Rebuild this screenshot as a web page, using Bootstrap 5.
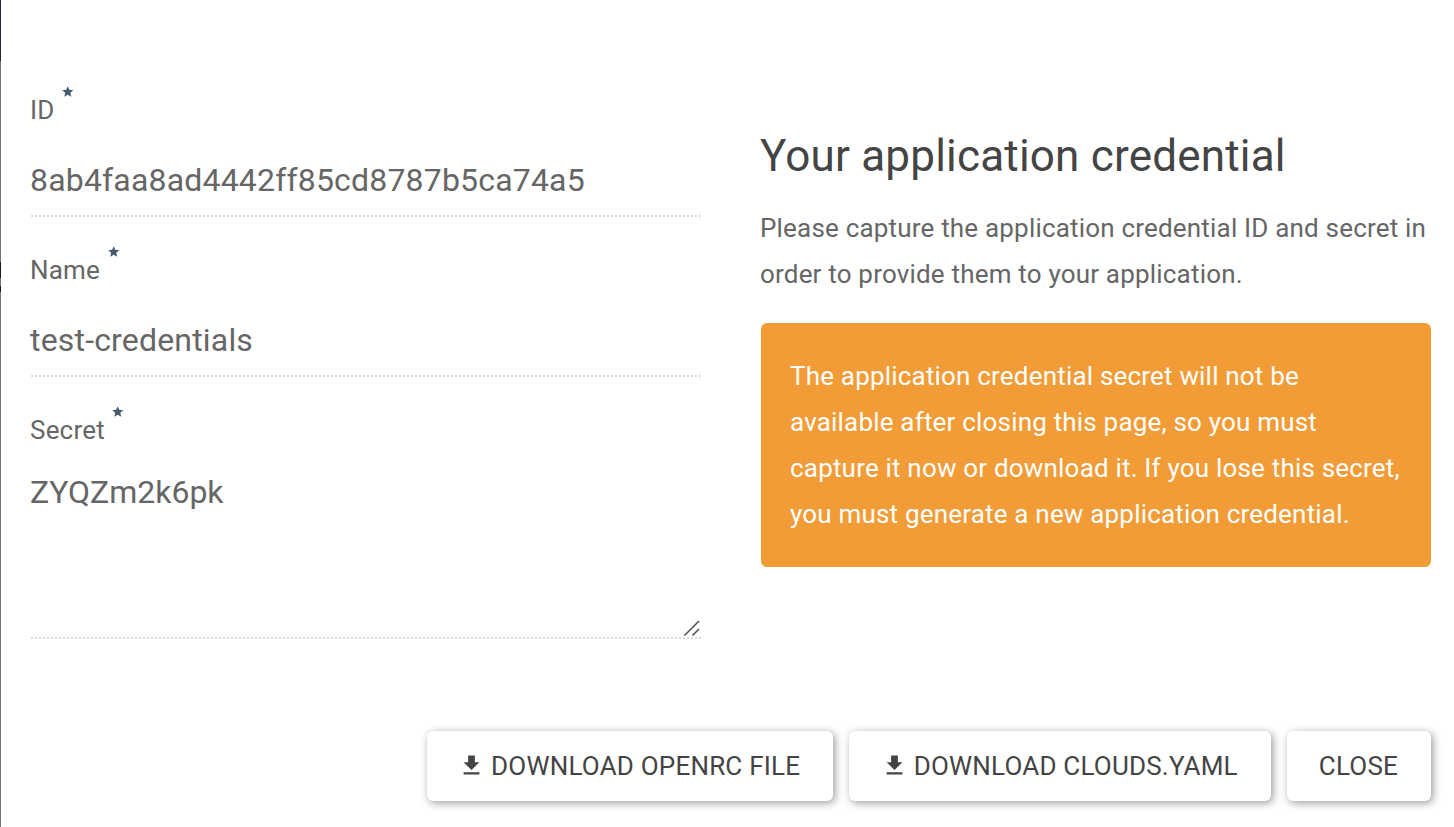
<!DOCTYPE html>
<html lang="en">
<head>
<meta charset="utf-8">
<title>Your application credential</title>
<link href="https://cdn.jsdelivr.net/npm/bootstrap@5.3.0/dist/css/bootstrap.min.css" rel="stylesheet">
<style>
body{font-family:Roboto,sans-serif;font-size:26px;line-height:46px;letter-spacing:.19px;color:#666;background:#fff;height:827px;overflow:hidden}
.page-edge{width:1px;flex:none;background:linear-gradient(#202a3a 61px,#777 61px,#777 262px,#1c1c1c 262px,#1c1c1c 278px,#777 278px,#777 286px,#1c1c1c 286px,#1c1c1c 292px,#777 292px)}
.dialog-body{padding:87px 23px 0 29px;height:731px}
.fields{width:671px}
.help{width:671px;padding-top:41px}
.field-label{height:56px;letter-spacing:.2px}
.req{width:13.5px;height:13.5px;margin:-2px 0 0 6.5px;fill:#455a6b}
.field{height:160px}
.form-control,.form-control:focus{font-size:32px;line-height:46px;letter-spacing:.18px;color:#666;padding:0;border:0;border-radius:0;box-shadow:none;background:repeating-linear-gradient(90deg,#ddd 0 2px,transparent 2px 4px) 1px 100%/670px 2px no-repeat}
input.form-control{height:74px}
textarea.form-control,textarea.form-control:focus{height:176px;resize:none;padding-top:6px;letter-spacing:0}
.area-grip{right:1px;bottom:2px}
h1{font-size:44px;line-height:56px;letter-spacing:.2px;color:#444;font-weight:400;margin:0 0 21px}
p{margin:0 0 26px}
.alert{background:#f29c38;color:#fff;border:0;border-radius:6px;padding:30px 29px;margin:0 0 0 1px;height:244px}
.dialog-actions{gap:16px;padding-right:23px}
.btn,.btn:hover{font-size:26px;line-height:46px;letter-spacing:.2px;color:#444;height:70px;padding:12px 33px 12px 32px;border:0;border-radius:6px;background:#fff;box-shadow:2px 2px 8px rgba(0,0,0,.4);white-space:nowrap}
.btn .dl{width:27px;height:27px;margin:9px 6px 0 -.5px;flex:none}
</style>
</head>
<body>
<div class="d-flex h-100">
<div class="page-edge"></div>
<main class="flex-grow-1">
<section class="dialog-body d-flex justify-content-between">
<form class="fields">
<div class="field"><label class="field-label d-flex" for="i">ID<svg class="req" viewBox="0 0 24 24"><path d="M12 17.27 18.18 21l-1.64-7.03L22 9.24l-7.19-.61L12 2 9.19 8.63 2 9.24l5.46 4.73L5.82 21z"/></svg></label><input id="i" class="form-control" value="8ab4faa8ad4442ff85cd8787b5ca74a5" readonly></div>
<div class="field"><label class="field-label d-flex" for="n">Name<svg class="req" viewBox="0 0 24 24"><path d="M12 17.27 18.18 21l-1.64-7.03L22 9.24l-7.19-.61L12 2 9.19 8.63 2 9.24l5.46 4.73L5.82 21z"/></svg></label><input id="n" class="form-control" value="test-credentials" readonly></div>
<div class="position-relative"><label class="field-label d-flex" for="s">Secret<svg class="req" viewBox="0 0 24 24"><path d="M12 17.27 18.18 21l-1.64-7.03L22 9.24l-7.19-.61L12 2 9.19 8.63 2 9.24l5.46 4.73L5.82 21z"/></svg></label><textarea id="s" class="form-control d-block" readonly>ZYQZm2k6pk</textarea>
<svg class="area-grip position-absolute" width="17" height="17" viewBox="0 0 17 17" stroke="#555" stroke-width="1.6"><path d="M1.5 15.5 16 1M9.5 15.5 16 9"/></svg></div>
</form>
<aside class="help">
<h1>Your application credential</h1>
<p>Please capture the application credential ID and secret in<br>order to provide them to your application.</p>
<div class="alert" role="alert">The application credential secret will not be<br>available after closing this page, so you must<br>capture it now or download it. If you lose this secret,<br>you must generate a new application credential.</div>
</aside>
</section>
<footer class="dialog-actions d-flex justify-content-end">
<button class="btn d-flex"><svg viewBox="0 0 24 24" fill="#444" class="dl"><path d="M19 9h-4V3H9v6H5l7 7 7-7zM5 18v2h14v-2H5z"/></svg>DOWNLOAD OPENRC FILE</button>
<button class="btn d-flex"><svg viewBox="0 0 24 24" fill="#444" class="dl"><path d="M19 9h-4V3H9v6H5l7 7 7-7zM5 18v2h14v-2H5z"/></svg>DOWNLOAD CLOUDS.YAML</button>
<button class="btn">CLOSE</button>
</footer>
</main>
</div>
<script src="https://cdn.jsdelivr.net/npm/bootstrap@5.3.0/dist/js/bootstrap.bundle.min.js"></script>
</body>
</html>
